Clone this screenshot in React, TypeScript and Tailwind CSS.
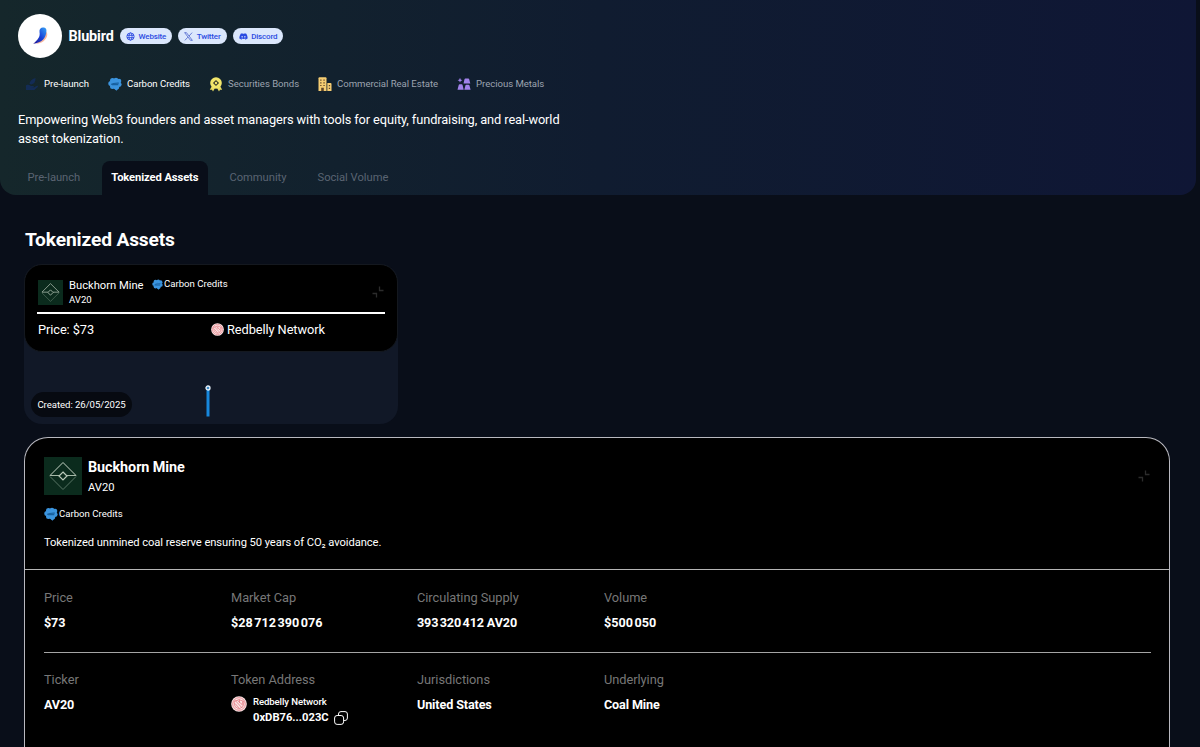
import type { ReactNode } from "react";
import { FaDiscord } from "react-icons/fa";

const CarbonIcon = ({ className }: { className: string }) => (
  <svg viewBox="0 0 14 14" className={className}>
    <g fill="#3b94de">
      <circle cx="4.500" cy="3.500" r="2.500" />
      <circle cx="8" cy="3" r="2.300" />
      <circle cx="11" cy="4" r="2.300" />
      <circle cx="2.800" cy="6.500" r="2.500" />
      <circle cx="11.200" cy="7.500" r="2.400" />
      <circle cx="4.500" cy="9.500" r="2.500" />
      <circle cx="8.500" cy="10" r="2.700" />
      <path d="M4 4h7v6l-2.500 3.800L6 11.500 4 10z" />
    </g>
    <path d="M3.200 7.500C5 5.900 8 6.100 10.800 6.100M4 7.700h6.300" stroke="#17609f" strokeWidth="1.200" fill="none" />
  </svg>
);

const PrelaunchIcon = () => (
  <svg viewBox="0 0 14 14" className="w-[14px] h-[14px]" fill="#132c55">
    <path d="M1 8.200c2-.9 3.500-.5 4.800.8h2.500c.8 0 .8 1.200 0 1.200H6l3 .2 2.800-1.600c.9-.4 1.600.5.9 1.100L9.300 13H1z" />
    <path d="M4.500 7c0-2.500 2-5 6-6 .2 3.500-1.500 6-4 6.500z" />
  </svg>
);

const BondIcon = () => (
  <svg viewBox="0 0 14 15" className="w-[14px] h-[15px]">
    <path d="M3 9 .8 12.800l2.200-.1 1 1.800 2-3.500zM11 9l2.200 3.800-2.200-.1-1 1.800-2-3.500z" fill="#e9dc62" />
    <circle cx="7" cy="6" r="5.800" fill="#f2e66b" />
    <path d="m7 2.900 3.100 3.100L7 9.100 3.900 6z" fill="#3c3d2b" />
    <circle cx="7" cy="6" r="1.200" fill="#f2e66b" />
  </svg>
);

const BuildingIcon = () => (
  <svg viewBox="0 0 14 14" className="w-[14px] h-[14px]">
    <path d="M.5 1.200Q.5.2 1.500.2h6Q8.500.2 8.500 1.200V14H.5z" fill="#f6cd72" />
    <path d="M9.300 6h3.200q1 0 1 1v7H9.300z" fill="#f6cd72" />
    <path
      d="M2.200 2.500h1.300v1.200H2.200zM5.400 2.500h1.300v1.200H5.400zM2.200 5.200h1.300v1.200H2.200zM5.400 5.200h1.300v1.200H5.400zM2.200 7.900h1.300v1.200H2.200zM5.400 7.900h1.300v1.200H5.400zM3.200 10.800h2.600V14H3.200zM10.800 8h1.300v1.200h-1.300zM10.800 10.700h1.300v1.200h-1.300z"
      fill="#5d4428"
    />
  </svg>
);

const MetalsIcon = () => (
  <svg viewBox="0 0 14 14" className="w-[14px] h-[14px]" fill="#a182ea">
    <path d="M3 .8 3.700 2.500 5.400 3.200 3.700 3.900 3 5.600 2.300 3.900.6 3.200 2.300 2.500z" />
    <path d="M8.300 1.500h3q.7 0 .9.700l1.100 4.300H6.500l1-4.300q.2-.7.800-.7zM2.700 7.200h2q.6 0 .8.600l1.200 4.900H.5l1.300-4.900q.2-.6.9-.6zM9.300 7.700h2.200q.7 0 .9.600l1.200 4.400H7.300l1.200-4.400q.2-.6.800-.6z" />
  </svg>
);

const GlobeIcon = () => (
  <svg viewBox="0 0 10 10" className="w-[9px] h-[9px]" fill="none" stroke="#2f4ce0" strokeWidth="1">
    <circle cx="5" cy="5" r="4" />
    <path d="M1 3.700h8M1 6.300h8" />
    <ellipse cx="5" cy="5" rx="1.700" ry="4" />
  </svg>
);

const XIcon = () => (
  <svg viewBox="0 0 10 10" className="w-[9px] h-[9px]" fill="none" stroke="#4058c8" strokeWidth=".8">
    <path d="M.7.700h2L9.300 9.300h-2zM9 .7 5.600 4.500M4.300 5.700 1 9.300" />
  </svg>
);

const RedbellyIcon = ({ className }: { className: string }) => (
  <svg viewBox="0 0 16 16" className={className}>
    <circle cx="8" cy="8" r="7.800" fill="#fbe3e4" />
    <g fill="none" stroke="#e47d85" strokeWidth=".8">
      <circle cx="8" cy="8" r="6.300" />
      <path d="M3 5.500 8 3.600l5 1.900-1 5L8 13l-4-2.500zM4.200 4.500l6.800 7.300M6.500 4.500l5.500 4.800M4 7.500l4.500 5M8.500 7V3.500M11 8.500l1-3.500" />
    </g>
  </svg>
);

const MineLogo = ({ className }: { className: string }) => (
  <svg viewBox="0 0 38 38" className={className}>
    <path d="M0 0h38v38H0z" fill="#0b2b1d" />
    <g fill="none" strokeWidth="1">
      <path d="M6 18.500 19 5.500l13 13" stroke="#c6d3c5" />
      <path d="M6 19.500 19 32.500l13-13" stroke="#587565" />
      <path d="M6 18.500h9M23 18.500h9" stroke="#a5b8a8" strokeWidth="1.200" />
      <path d="m19 15 4 4-4 4-4-4z" stroke="#b9c9b9" strokeWidth="1.200" />
    </g>
  </svg>
);

const CollapseIcon = ({ className }: { className: string }) => (
  <svg viewBox="0 0 12 12" className={className} fill="none" stroke="#2c2c2c" strokeWidth="1.300">
    <path d="M7.500.5v4h4M.5 7.500h4v4" />
  </svg>
);

const Pill = ({ icon, label }: { icon: ReactNode; label: string }) => (
  <a className="flex items-center gap-[3.5px] h-4 px-[6px] rounded-full bg-[#dbe7fc] text-[#2b4be2] text-[8px] leading-none font-medium tracking-[-0.02em]">
    {icon}
    <span className="pt-px">{label}</span>
  </a>
);

const tags = [
  { label: "Pre-launch", icon: <PrelaunchIcon />, className: "w-[83px] text-white" },
  { label: "Carbon Credits", icon: <CarbonIcon className="w-[14px] h-[14px]" />, className: "w-[101px] text-white" },
  { label: "Securities Bonds", icon: <BondIcon />, className: "w-[109px] text-[#9ca3af]" },
  { label: "Commercial Real Estate", icon: <BuildingIcon />, className: "w-[139px] text-[#9ca3af]" },
  { label: "Precious Metals", icon: <MetalsIcon />, className: "text-[#9ca3af]" },
];

const tabs = ["Pre-launch", "Tokenized Assets", "Community", "Social Volume"];

const Header = () => (
  <header className="w-[1196px] h-[195px] rounded-b-[16px] bg-linear-to-r from-[#15272b] via-[#101c30] to-[#0f1635] pt-[14px] px-[18px]">
    <div className="flex items-center h-11">
      <div className="w-11 h-11 rounded-full bg-white flex items-center justify-center">
        <svg viewBox="0 0 16 18" className="w-4 h-[18px]">
          <defs>
            <linearGradient id="feather" x1="1" y1="0" x2="0" y2="1">
              <stop offset="0" stopColor="#38a5f5" />
              <stop offset=".5" stopColor="#1742d8" />
              <stop offset="1" stopColor="#24128c" />
            </linearGradient>
          </defs>
          <path d="M13 3.500Q17 7 14 11.500T4 17Q10 13 13 3.500z" fill="#f7b79c" />
          <path d="M7.500 5C7 1.500 9.500 0 12 .6c2.200.5 2.600 2 2.400 4C14 11 10 16 1.200 16.800 5.500 13 8.500 10 7.500 5z" fill="url(#feather)" />
        </svg>
      </div>
      <h1 className="ml-[6.5px] w-[51.5px] pt-[2px] text-[14.4px] font-bold tracking-[-0.01em] text-white">Blubird</h1>
      <div className="flex gap-[6px]">
        <Pill icon={<GlobeIcon />} label="Website" />
        <Pill icon={<XIcon />} label="Twitter" />
        <Pill icon={<FaDiscord size={9} />} label="Discord" />
      </div>
    </div>
    <div className="flex items-center h-4 mt-[18px] pl-[7px] text-[9.6px] tracking-[-0.04px]">
      {tags.map((tag) => (
        <div key={tag.label} className={`flex items-center gap-[5px] whitespace-nowrap ${tag.className}`}>
          {tag.icon}
          {tag.label}
        </div>
      ))}
    </div>
    <p className="mt-[18px] w-[560px] text-[12.8px] leading-[19.2px] tracking-[-0.095px] text-white">
      Empowering Web3 founders and asset managers with tools for equity, fundraising, and real-world asset tokenization.
    </p>
    <nav className="flex gap-[12px] mt-[13px] h-[34px] text-[11.2px]">
      {tabs.map((tab) => (
        <a
          key={tab}
          className={
            tab === "Tokenized Assets"
              ? "px-[9.5px] pt-[9px] rounded-t-[8px] bg-[#090e19] text-white font-bold tracking-[-0.1px]"
              : "px-[9.5px] pt-[9px] text-[#5a6472] tracking-[-0.02px]"
          }
        >
          {tab}
        </a>
      ))}
    </nav>
  </header>
);

const AssetCard = () => (
  <div className="w-[374px] h-[160px] rounded-[18px] bg-[#111827]">
    <div className="h-[88px] rounded-[18px] bg-black border border-[#14181f] px-3 pt-[15px] text-white">
      <div className="flex h-[32px] pl-px">
        <MineLogo className="w-[25px] h-[25px]" />
        <div className="ml-[6px] w-[83px]">
          <div className="text-[11.2px] leading-[12px] whitespace-nowrap">Buckhorn Mine</div>
          <div className="text-[9.6px] leading-[15px]">AV20</div>
        </div>
        <div className="flex items-center h-[8px] text-[9.6px] leading-[8px]">
          <CarbonIcon className="w-[11px] h-[11px] mr-[1px]" />
          Carbon Credits
        </div>
        <CollapseIcon className="w-3 h-3 mt-[6px] ml-auto mr-px" />
      </div>
      <div className="grid grid-cols-2 items-center h-[33px] border-t-2 border-white text-[12.8px] tracking-[-0.08px]">
        <span className="pl-px">Price: $73</span>
        <span className="flex items-center gap-[3px]">
          <RedbellyIcon className="w-[13px] h-[13px]" />
          Redbelly Network
        </span>
      </div>
    </div>
    <div className="flex items-end h-[72px] pl-[7px] pb-[7px]">
      <span className="w-[101px] h-[25px] rounded-full bg-[#070a11] text-white text-[9.6px] leading-[25px] text-center tracking-[-0.05px]">
        Created: 26/05/2025
      </span>
      <svg viewBox="0 0 8 33" className="w-2 h-[33px] ml-[72px]">
        <path d="M4 4v28.500" stroke="#1787dc" strokeWidth="3" />
        <circle cx="4" cy="4" r="2" fill="#3c8ac8" stroke="#e8f2fa" strokeWidth="1.300" />
      </svg>
    </div>
  </div>
);

const Field = ({ label, value }: { label: string; value: ReactNode }) => (
  <div>
    <div className="text-[12.8px] leading-[18px] tracking-[-0.04px] text-[#777]">{label}</div>
    <div className="mt-[7px] text-[12.6px] leading-[18px] font-bold tracking-[-0.12px] text-white">{value}</div>
  </div>
);

const TokenAddress = () => (
  <div>
    <div className="text-[12.8px] leading-[18px] tracking-[-0.04px] text-[#777]">Token Address</div>
    <div className="flex mt-[7px]">
      <RedbellyIcon className="w-4 h-4" />
      <div className="ml-[6px] text-white">
        <div className="text-[9.6px] leading-[12px] font-medium tracking-[-0.1px]">Redbelly Network</div>
        <div className="flex text-[11.2px] leading-[19px] font-bold">
          0xDB76...023C
          <svg viewBox="0 0 14 14" className="w-[14px] h-[14px] ml-[5px] mt-[3px]" fill="none" stroke="white">
            <rect x=".6" y="4.500" width="9" height="8.900" rx="2.500" />
            <path d="M4.500 4.300V3Q4.500.6 7 .6h4Q13.400.6 13.400 3v4q0 2.500-2.500 2.500H9.800" />
          </svg>
        </div>
      </div>
    </div>
  </div>
);

const AssetDetails = () => (
  <div className="w-[1146px] h-[330px] shrink-0 mt-[13px] rounded-t-[24px] border border-b-0 border-[#b9b9c0] bg-black">
    <div className="h-[132px] border-b border-[#b5b5b5] pl-[19px] pr-[18px] pt-[19px] text-white">
      <div className="flex">
        <MineLogo className="w-[38px] h-[38px]" />
        <div className="ml-[6px]">
          <h3 className="text-[14.4px] leading-[22px] font-bold tracking-[-0.08px]">Buckhorn Mine</h3>
          <div className="text-[11.2px] leading-[17px]">AV20</div>
        </div>
        <CollapseIcon className="w-3 h-3 mt-[13px] ml-auto mr-px" />
      </div>
      <div className="flex items-center gap-[1px] h-[14px] mt-[11px] text-[9.6px]">
        <CarbonIcon className="w-[14px] h-[14px]" />
        Carbon Credits
      </div>
      <p className="mt-[13px] text-[11.2px] leading-[18px] tracking-[-0.07px]">
        Tokenized unmined coal reserve ensuring 50 years of CO₂ avoidance.
      </p>
    </div>
    <div className="ml-[19px] mr-[18px] h-[83px] pt-[19px] grid grid-cols-[187px_186px_187px_1fr] border-b border-[#a5a5a5]">
      <Field label="Price" value="$73" />
      <Field label="Market Cap" value={"$28\u202f712\u202f390\u202f076"} />
      <Field label="Circulating Supply" value={"393\u202f320\u202f412 AV20"} />
      <Field label="Volume" value={"$500\u202f050"} />
    </div>
    <div className="ml-[19px] mr-[18px] pt-[18px] grid grid-cols-[187px_186px_187px_1fr]">
      <Field label="Ticker" value="AV20" />
      <TokenAddress />
      <Field label="Jurisdictions" value="United States" />
      <Field label="Underlying" value="Coal Mine" />
    </div>
  </div>
);

export default function App() {
  return (
    <div className="w-full h-[747px] overflow-hidden bg-[#090e19] font-['Roboto',sans-serif]">
      <Header />
      <main className="pl-6 pt-[31px]">
        <h2 className="mb-[10px] pl-px text-[19.2px] leading-[28px] font-bold tracking-[-0.15px] text-white">
          Tokenized Assets
        </h2>
        <AssetCard />
        <AssetDetails />
      </main>
    </div>
  );
}
